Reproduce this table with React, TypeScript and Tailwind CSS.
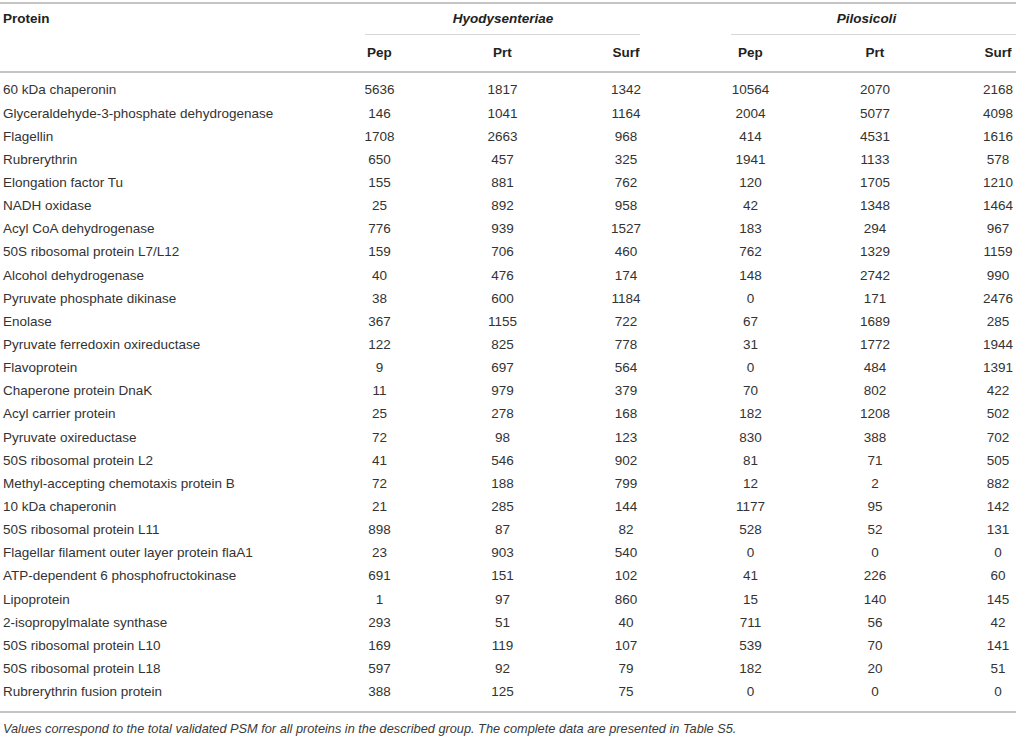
import React from 'react';

type Row = [string, number, number, number, number, number, number];

const rows: Row[] = [
    ['60 kDa chaperonin', 5636, 1817, 1342, 10564, 2070, 2168],
    ['Glyceraldehyde-3-phosphate dehydrogenase', 146, 1041, 1164, 2004, 5077, 4098],
    ['Flagellin', 1708, 2663, 968, 414, 4531, 1616],
    ['Rubrerythrin', 650, 457, 325, 1941, 1133, 578],
    ['Elongation factor Tu', 155, 881, 762, 120, 1705, 1210],
    ['NADH oxidase', 25, 892, 958, 42, 1348, 1464],
    ['Acyl CoA dehydrogenase', 776, 939, 1527, 183, 294, 967],
    ['50S ribosomal protein L7/L12', 159, 706, 460, 762, 1329, 1159],
    ['Alcohol dehydrogenase', 40, 476, 174, 148, 2742, 990],
    ['Pyruvate phosphate dikinase', 38, 600, 1184, 0, 171, 2476],
    ['Enolase', 367, 1155, 722, 67, 1689, 285],
    ['Pyruvate ferredoxin oxireductase', 122, 825, 778, 31, 1772, 1944],
    ['Flavoprotein', 9, 697, 564, 0, 484, 1391],
    ['Chaperone protein DnaK', 11, 979, 379, 70, 802, 422],
    ['Acyl carrier protein', 25, 278, 168, 182, 1208, 502],
    ['Pyruvate oxireductase', 72, 98, 123, 830, 388, 702],
    ['50S ribosomal protein L2', 41, 546, 902, 81, 71, 505],
    ['Methyl-accepting chemotaxis protein B', 72, 188, 799, 12, 2, 882],
    ['10 kDa chaperonin', 21, 285, 144, 1177, 95, 142],
    ['50S ribosomal protein L11', 898, 87, 82, 528, 52, 131],
    ['Flagellar filament outer layer protein flaA1', 23, 903, 540, 0, 0, 0],
    ['ATP-dependent 6 phosphofructokinase', 691, 151, 102, 41, 226, 60],
    ['Lipoprotein', 1, 97, 860, 15, 140, 145],
    ['2-isopropylmalate synthase', 293, 51, 40, 711, 56, 42],
    ['50S ribosomal protein L10', 169, 119, 107, 539, 70, 141],
    ['50S ribosomal protein L18', 597, 92, 79, 182, 20, 51],
    ['Rubrerythrin fusion protein', 388, 125, 75, 0, 0, 0],
];

const gridCols = 'grid grid-cols-[318px_123px_123px_124px_125px_124px_122px]';

export default function App() {
    return (
        <div
            className="w-[1016px] h-[745px] overflow-hidden bg-white text-[#333]"
            style={{ fontFamily: '"Liberation Sans", Arial, sans-serif' }}
        >
            <div className="w-[1059px] pt-[2px]">
                <div className="border-t-2 border-[#c4c4c4]">
                    {/* group header */}
                    <div className={gridCols}>
                        <div className="h-[30px] flex items-center pl-[3px] text-[13.5px] font-bold text-[#222]">
                            Protein
                        </div>
                        <div className="col-span-3 flex flex-col">
                            <div className="h-[30px] flex items-center justify-center text-[13.5px] font-bold italic text-[#222]">
                                Hyodysenteriae
                            </div>
                            <div className="ml-[47px] mr-[48px] border-t border-[#d6d6d6]" />
                        </div>
                        <div className="col-span-3 flex flex-col">
                            <div className="h-[30px] flex items-center justify-center pr-[14px] text-[13.5px] font-bold italic text-[#222]">
                                Pilosicoli
                            </div>
                            <div className="ml-[43px] mr-[43px] border-t border-[#d6d6d6]" />
                        </div>
                    </div>
                    {/* column header */}
                    <div className={gridCols}>
                        <div />
                        {['Pep', 'Prt', 'Surf', 'Pep', 'Prt', 'Surf'].map((h, i) => (
                            <div
                                key={i}
                                className="h-[36px] flex items-center justify-center text-[13.5px] font-bold text-[#222]"
                            >
                                {h}
                            </div>
                        ))}
                    </div>
                </div>
                <div className="border-t-2 border-[#c4c4c4] pt-[6px] pb-[7px] border-b-2">
                    {rows.map((r) => (
                        <div key={r[0]} className={`${gridCols} h-[23.15px] items-center text-[13.5px]`}>
                            <div className="pl-[3px] whitespace-nowrap">{r[0]}</div>
                            {r.slice(1).map((v, j) => (
                                <div key={j} className="text-center">
                                    {v}
                                </div>
                            ))}
                        </div>
                    ))}
                </div>
            </div>
            <p className="pl-[3px] pt-[6px] text-[12.75px] italic text-[#3a3a3a] whitespace-nowrap">
                Values correspond to the total validated PSM for all proteins in the described group. The complete data are presented in Table S5.
            </p>
        </div>
    );
}
